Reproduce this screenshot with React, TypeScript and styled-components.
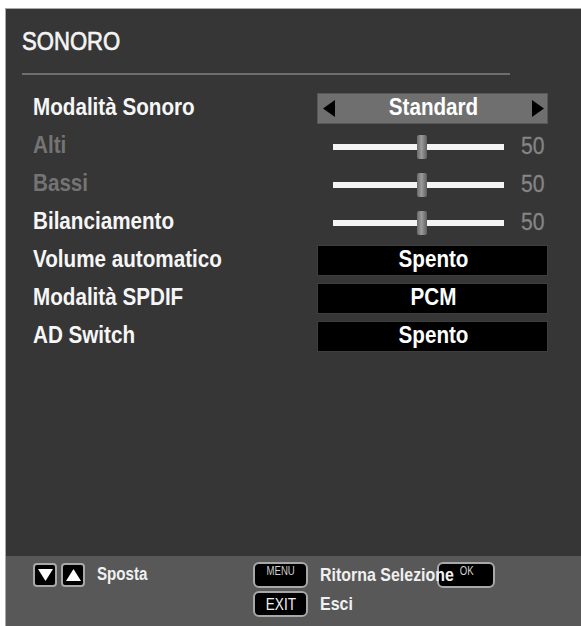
import React from 'react';
import styled, { createGlobalStyle, css } from 'styled-components';

const GlobalStyle = createGlobalStyle`
  html, body {
    margin: 0;
    padding: 0;
    background: #ffffff;
  }
  body {
    font-family: 'Liberation Sans', Arial, sans-serif;
  }
`;

// the OSD font is a condensed grotesque; squeeze Liberation Sans horizontally
const narrow = (origin: string, scale = 0.86) => css`
  display: inline-block;
  white-space: nowrap;
  transform: scaleX(${scale});
  transform-origin: ${origin} center;
`;

const Screen = styled.div`
  width: 581px;
  height: 626px;
  padding: 8px 0 0 5px;
  box-sizing: border-box;
`;

const Panel = styled.div`
  height: 618px;
  display: flex;
  flex-direction: column;
  border-top: 1px solid #a8a8a8;
  border-left: 1px solid #a8a8a8;
  background: #363636;
  box-sizing: border-box;
`;

const Content = styled.div`
  flex: 1;
  padding: 16px 33px 0 16px;
`;

const Title = styled.h1`
  margin: 0;
  height: 32px;
  line-height: 32px;
  font-size: 26px;
  font-weight: 400;
  color: #f4f4f4;
  -webkit-text-stroke: 0.7px #f4f4f4;
  ${narrow('left', 0.85)}
`;

const Divider = styled.div`
  height: 2px;
  margin: 16px 0 18px 0;
  width: 488px;
  background: #6e6e6e;
`;

const List = styled.div`
  display: flex;
  flex-direction: column;
  gap: 7px;
  padding-left: 11px;
`;

const Row = styled.div`
  display: grid;
  grid-template-columns: 1fr 231px;
  align-items: center;
  height: 31px;
`;

const Label = styled.span<{ $disabled?: boolean }>`
  font-size: 24px;
  font-weight: 700;
  margin-top: -3px;
  color: ${(p) => (p.$disabled ? '#747474' : '#f6f6f6')};
  ${narrow('left')}
`;

const ValueBox = styled.div<{ $tone: 'select' | 'dark' }>`
  height: 31px;
  box-sizing: border-box;
  display: flex;
  align-items: center;
  justify-content: space-between;
  padding: 0 3px 0 5px;
  background: ${(p) => (p.$tone === 'select' ? '#6f6f6f' : '#000000')};
  border: 1px solid ${(p) => (p.$tone === 'select' ? '#575757' : '#3e3e3e')};
  color: #ffffff;
`;

const ValueText = styled.span`
  flex: 1;
  text-align: center;
  font-size: 24px;
  font-weight: 700;
  margin-top: -3px;
  ${narrow('center')}
`;

const Arrow = styled.svg`
  width: 12px;
  height: 17px;
  flex: none;
`;

const SliderWrap = styled.div`
  display: flex;
  align-items: center;
  height: 31px;
  padding-left: 16px;
`;

const Track = styled.div`
  position: relative;
  width: 171px;
  height: 6px;
  background: #f4f4f4;
`;

const Thumb = styled.div`
  position: absolute;
  top: -9px;
  width: 10px;
  height: 24px;
  border-radius: 2px;
  background: linear-gradient(90deg, #6a6a6a 0%, #9a9a9a 45%, #8a8a8a 60%, #5e5e5e 100%);
`;

const SliderValue = styled.span`
  margin-left: auto;
  margin-right: 3px;
  font-size: 23px;
  font-weight: 400;
  color: #858585;
  -webkit-text-stroke: 0.3px #858585;
  ${narrow('right', 0.92)}
`;

const Footer = styled.div`
  height: 70px;
  flex: none;
  background: #585858;
  display: grid;
  grid-template-columns: 220px 67px 1fr;
  grid-template-rows: 25px 25px;
  row-gap: 4px;
  padding: 6px 0 0 27px;
  box-sizing: border-box;
`;

const NavGroup = styled.div`
  display: flex;
  align-items: center;
  gap: 4px;
`;

const IconKey = styled.div`
  width: 24px;
  height: 24px;
  box-sizing: border-box;
  border: 2px solid #a8a8a8;
  border-radius: 4px;
  background: #000;
  display: flex;
  align-items: center;
  justify-content: center;
`;

const FooterText = styled.span<{ $size?: number }>`
  position: relative;
  z-index: 1;
  font-size: ${(p) => p.$size ?? 19}px;
  font-weight: 700;
  color: #f0f0f0;
  line-height: 25px;
  ${narrow('left', 0.84)}
`;

const Key = styled.div`
  width: 55px;
  height: 26px;
  box-sizing: border-box;
  border: 2px solid #a8a8a8;
  border-radius: 6px;
  background: #000;
  display: flex;
  justify-content: center;
  align-items: center;
`;

const KeyLabel = styled.span<{ $small?: boolean }>`
  color: ${(p) => (p.$small ? '#cfcfcf' : '#f0f0f0')};
  font-size: ${(p) => (p.$small ? '12px' : '17px')};
  align-self: ${(p) => (p.$small ? 'flex-start' : 'center')};
  margin-top: ${(p) => (p.$small ? '1px' : '0')};
  line-height: 1;
  ${narrow('center', 0.8)}
`;

const TextLine = styled.div`
  display: flex;
  align-items: center;
`;

const OkKey = styled(Key)`
  width: 58px;
  margin-left: -42px;
  z-index: 0;
`;

type Item =
  | { label: string; kind: 'select'; value: string }
  | { label: string; kind: 'slider'; value: number; disabled?: boolean }
  | { label: string; kind: 'box'; value: string };

const items: Item[] = [
  { label: 'Modalità Sonoro', kind: 'select', value: 'Standard' },
  { label: 'Alti', kind: 'slider', value: 50, disabled: true },
  { label: 'Bassi', kind: 'slider', value: 50, disabled: true },
  { label: 'Bilanciamento', kind: 'slider', value: 50 },
  { label: 'Volume automatico', kind: 'box', value: 'Spento' },
  { label: 'Modalità SPDIF', kind: 'box', value: 'PCM' },
  { label: 'AD Switch', kind: 'box', value: 'Spento' },
];

const Slider: React.FC<{ value: number }> = ({ value }) => (
  <SliderWrap>
    <Track>
      <Thumb style={{ left: `${(value / 100) * 171 - 2}px` }} />
    </Track>
    <SliderValue>{value}</SliderValue>
  </SliderWrap>
);

export default function App() {
  return (
    <Screen>
      <GlobalStyle />
      <Panel>
        <Content>
          <Title>SONORO</Title>
          <Divider />
          <List>
            {items.map((item) => (
              <Row key={item.label}>
                <Label $disabled={item.kind === 'slider' && item.disabled}>{item.label}</Label>
                {item.kind === 'select' && (
                  <ValueBox $tone="select">
                    <Arrow viewBox="0 0 12 17">
                      <polygon points="12,0 12,17 0,8.5" fill="#000" />
                    </Arrow>
                    <ValueText>{item.value}</ValueText>
                    <Arrow viewBox="0 0 12 17">
                      <polygon points="0,0 0,17 12,8.5" fill="#000" />
                    </Arrow>
                  </ValueBox>
                )}
                {item.kind === 'slider' && <Slider value={item.value} />}
                {item.kind === 'box' && (
                  <ValueBox $tone="dark">
                    <ValueText>{item.value}</ValueText>
                  </ValueBox>
                )}
              </Row>
            ))}
          </List>
        </Content>
        <Footer>
          <NavGroup>
            <IconKey>
              <svg width="15" height="14" viewBox="0 0 15 14">
                <polygon points="0,1 15,1 7.5,13" fill="#fff" />
              </svg>
            </IconKey>
            <IconKey>
              <svg width="15" height="14" viewBox="0 0 15 14">
                <polygon points="0,13 15,13 7.5,1" fill="#fff" />
              </svg>
            </IconKey>
            <FooterText $size={18} style={{ marginLeft: 8 }}>Sposta</FooterText>
          </NavGroup>
          <Key>
            <KeyLabel $small>MENU</KeyLabel>
          </Key>
          <TextLine>
            <FooterText>Ritorna Selezione</FooterText>
            <OkKey>
              <KeyLabel $small>OK</KeyLabel>
            </OkKey>
          </TextLine>
          <div />
          <Key>
            <KeyLabel>EXIT</KeyLabel>
          </Key>
          <TextLine>
            <FooterText>Esci</FooterText>
          </TextLine>
        </Footer>
      </Panel>
    </Screen>
  );
}
